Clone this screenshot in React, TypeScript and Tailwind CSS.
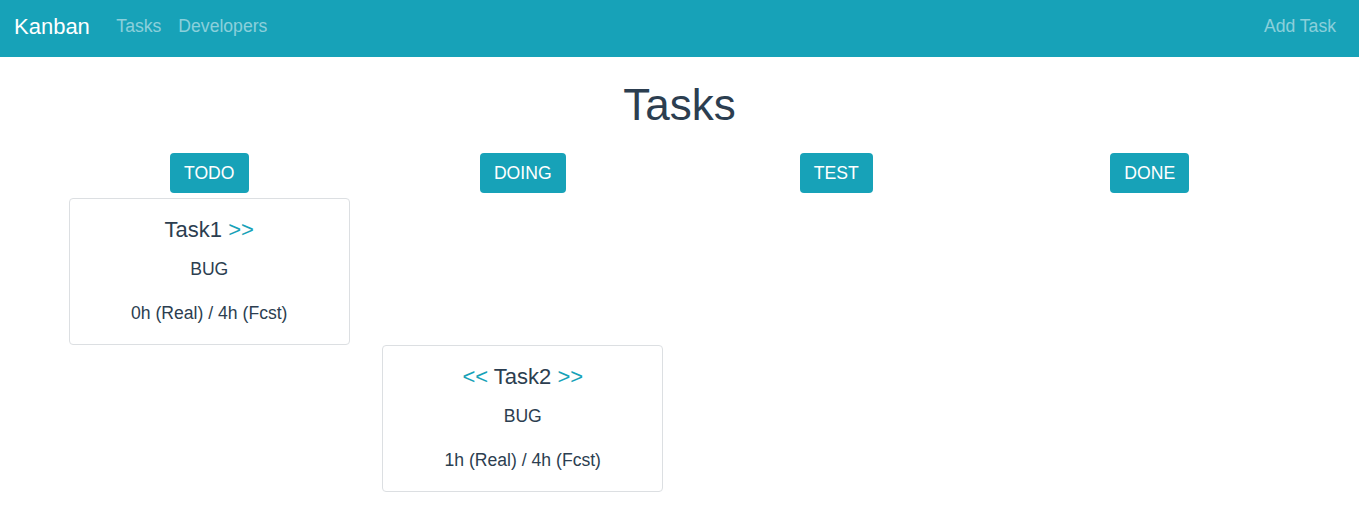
import React from "react";

type Task = { name: string; type: string; real: number; fcst: number; col: number };

const columns = ["TODO", "DOING", "TEST", "DONE"];

const tasks: Task[] = [
  { name: "Task1", type: "BUG", real: 0, fcst: 4, col: 0 },
  { name: "Task2", type: "BUG", real: 1, fcst: 4, col: 1 },
];

const TaskCard = ({ task }: { task: Task }) => {
  return (
    <div className="w-[281px] mx-auto border border-[#dcdfe2] rounded-[4px] bg-white pt-[18px] pb-[17px] text-center">
      <h5 className="text-[22px] leading-[26px] mb-[13px]">
        {task.col > 0 && <span className="text-[#17a2b8]">&lt;&lt; </span>}
        {task.name}
        {task.col < columns.length - 1 && <span className="text-[#17a2b8]"> &gt;&gt;</span>}
      </h5>
      <p className="text-[17.6px] leading-[26.4px] mb-[18px]">{task.type}</p>
      <p className="text-[17.6px] leading-[26.4px]">
        {task.real}h (Real) / {task.fcst}h (Fcst)
      </p>
    </div>
  );
};

export default function App() {
  return (
    <div className="min-h-screen bg-white text-[#2c3e50] font-['Liberation_Sans',Arial,sans-serif]">
      <nav className="h-[57px] bg-[#17a2b8] flex items-start px-[14px]">
        <div className="h-[52px] flex items-center w-full">
          <a className="text-white text-[22px] mr-[18px]">Kanban</a>
          <a className="text-white/50 text-[17.6px] px-[8.5px]">Tasks</a>
          <a className="text-white/50 text-[17.6px] px-[8.5px]">Developers</a>
          <div className="ml-auto">
            <a className="text-white/50 text-[17.6px] pr-[9px]">Add Task</a>
          </div>
        </div>
      </nav>

      <h1 className="text-center text-[44px] leading-[53px] mt-[21px] mb-[22px]">Tasks</h1>

      <div className="w-[1254px] mx-auto grid grid-cols-4">
        {columns.map((c) => (
          <div key={c} className="flex justify-center mb-[5px]">
            <button className="h-[40px] px-[14px] bg-[#17a2b8] text-white text-[17.6px] rounded-[4px]">
              {c}
            </button>
          </div>
        ))}
        {tasks.map((t) =>
          columns.map((c, i) => (
            <div key={t.name + c}>{t.col === i && <TaskCard task={t} />}</div>
          ))
        )}
      </div>
    </div>
  );
}
